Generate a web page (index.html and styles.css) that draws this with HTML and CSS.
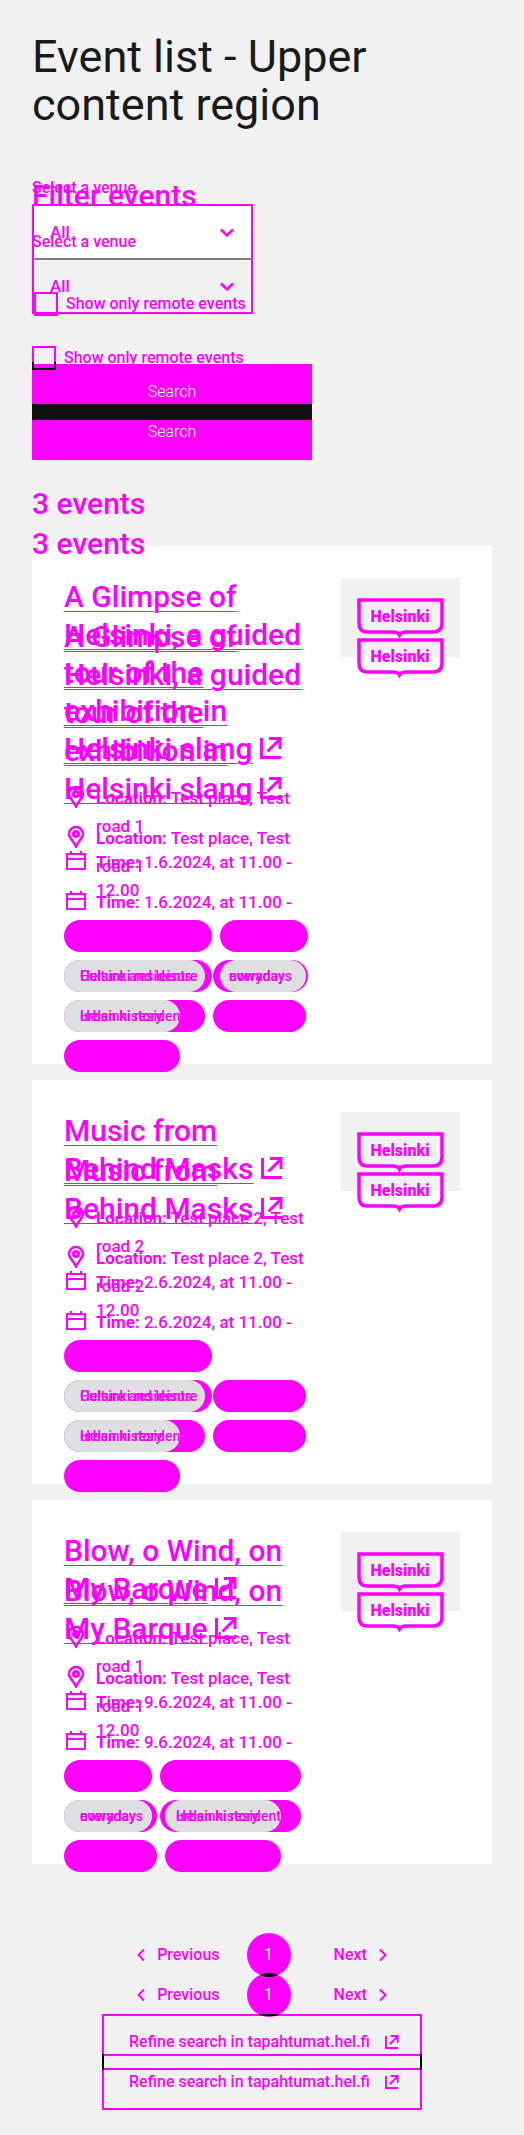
FILE: index.html
```html
<!DOCTYPE html>
<html lang="en">
<head>
<meta charset="utf-8">
<meta name="viewport" content="width=device-width, initial-scale=1">
<title>Event list - Upper content region</title>
<link rel="stylesheet" href="styles.css">
</head>
<body>
<svg class="symbols" aria-hidden="true">
  <symbol id="external" viewBox="0 0 22 22"><path d="M1.5 1V20.5H21M7.500 14.500 19 3M9 1.500H20V12" fill="none" stroke="currentColor" stroke-width="3"/></symbol>
  <symbol id="pin" viewBox="0 0 24 24"><path d="M12 3a7 7 0 0 0-7 7c0 4.500 5 7 7 12.500C14 17 19 14.500 19 10a7 7 0 0 0-7-7z" fill="none" stroke="currentColor" stroke-width="2.500"/><circle cx="12" cy="10" r="2.500" fill="none" stroke="currentColor" stroke-width="3"/></symbol>
  <symbol id="calendar" viewBox="0 0 24 24"><path d="M3 6H21V21H3ZM3 11H21M7 3V6M17 3V6" fill="none" stroke="currentColor" stroke-width="2"/></symbol>
  <symbol id="down" viewBox="0 0 14 10"><path d="M1 1.500 7 7.500 13 1.500" fill="none" stroke="currentColor" stroke-width="2.500"/></symbol>
  <symbol id="prev" viewBox="0 0 8 12"><path d="M7 .5 1.500 6 7 11.500" fill="none" stroke="currentColor" stroke-width="2"/></symbol>
  <symbol id="next" viewBox="0 0 8 12"><path d="M1 .5 6.500 6 1 11.500" fill="none" stroke="currentColor" stroke-width="2"/></symbol>
  <symbol id="logo" viewBox="0 0 88 40"><path d="M3 2H86V25Q86 34 77 34H50Q45 34 43.500 37Q42 34 37 34H11Q3 34 3 25Z" fill="none" stroke="currentColor" stroke-width="3.500"/><text x="44" y="24" text-anchor="middle" class="logo-text">Helsinki</text></symbol>
</svg>
<main class="page">
  <h1>Event list - Upper content region</h1>

  <section class="stack filters">
    <h2 class="filter-title">Filter events</h2>
    <form class="form form-before">
      <label class="label" for="venue-a">Select a venue</label>
      <div class="select-wrap"><select id="venue-a" class="select select-filled"><option>All</option></select><svg class="down"><use href="#down"/></svg></div>
      <div class="check check-before"><input type="checkbox" id="remote-a"><label for="remote-a">Show only remote events</label></div>
      <button type="button" class="search">Search</button>
    </form>
    <form class="form form-after">
      <label class="label" for="venue-b">Select a venue</label>
      <div class="select-wrap"><select id="venue-b" class="select select-joined"><option>All</option></select><svg class="down"><use href="#down"/></svg></div>
      <div class="check check-after"><input type="checkbox" id="remote-b"><label for="remote-b">Show only remote events</label></div>
      <button type="button" class="search search-after">Search</button>
    </form>
  </section>

  <div class="stack count"><h2>3 events</h2><h2 class="shifted">3 events</h2></div>

  <section class="cards">
    <article class="card">
      <div class="content">
        <div class="stack">
          <div class="copy">
            <h3><a href="#">A Glimpse of Helsinki, a guided tour of the exhibition in Helsinki slang</a> <svg class="external"><use href="#external"/></svg></h3>
            <p class="meta"><svg><use href="#pin"/></svg><span><b>Location:</b> Test place, Test road 1</span></p>
            <p class="meta"><svg><use href="#calendar"/></svg><span><b>Time:</b> 1.6.2024, at 11.00 - 12.00</span></p>
          </div>
          <div class="copy shifted">
            <h3><a href="#">A Glimpse of Helsinki, a guided tour of the exhibition in Helsinki slang</a> <svg class="external"><use href="#external"/></svg></h3>
            <p class="meta"><svg><use href="#pin"/></svg><span><b>Location:</b> Test place, Test road 1</span></p>
            <p class="meta"><svg><use href="#calendar"/></svg><span><b>Time:</b> 1.6.2024, at 11.00 - 12.00</span></p>
          </div>
        </div>
        <div class="tags">
          <div class="row"><span class="tag w148">Culture and leisure</span><span class="tag w88">everyday</span></div>
          <div class="row tight"><span class="tag w148"><span class="common w141"><i>Helsinki residents</i><i>Culture and leisure</i></span></span><span class="tag w95"><span class="common w86 near"><i>nowadays</i><i>everyday</i></span></span></div>
          <div class="row"><span class="tag w141"><span class="common w116"><i>urban history</i><i>Helsinki residents</i></span></span><span class="tag w93">nowadays</span></div>
          <div class="row"><span class="tag w116">urban history</span></div>
        </div>
      </div>
      <div class="image stack"><svg class="logo" role="img" aria-label="Helsinki"><use href="#logo"/></svg><svg class="logo shifted" aria-hidden="true"><use href="#logo"/></svg></div>
    </article>

    <article class="card">
      <div class="content">
        <div class="stack">
          <div class="copy">
            <h3><a href="#">Music from Behind Masks</a> <svg class="external"><use href="#external"/></svg></h3>
            <p class="meta"><svg><use href="#pin"/></svg><span><b>Location:</b> Test place 2, Test road 2</span></p>
            <p class="meta"><svg><use href="#calendar"/></svg><span><b>Time:</b> 2.6.2024, at 11.00 - 12.00</span></p>
          </div>
          <div class="copy shifted">
            <h3><a href="#">Music from Behind Masks</a> <svg class="external"><use href="#external"/></svg></h3>
            <p class="meta"><svg><use href="#pin"/></svg><span><b>Location:</b> Test place 2, Test road 2</span></p>
            <p class="meta"><svg><use href="#calendar"/></svg><span><b>Time:</b> 2.6.2024, at 11.00 - 12.00</span></p>
          </div>
        </div>
        <div class="tags">
          <div class="row"><span class="tag w148">Culture and leisure</span></div>
          <div class="row tight"><span class="tag w148"><span class="common w141"><i>Helsinki residents</i><i>Culture and leisure</i></span></span><span class="tag w93">nowadays</span></div>
          <div class="row"><span class="tag w141"><span class="common w116"><i>urban history</i><i>Helsinki residents</i></span></span><span class="tag w93">nowadays</span></div>
          <div class="row"><span class="tag w116">urban history</span></div>
        </div>
      </div>
      <div class="image stack"><svg class="logo" role="img" aria-label="Helsinki"><use href="#logo"/></svg><svg class="logo shifted" aria-hidden="true"><use href="#logo"/></svg></div>
    </article>

    <article class="card">
      <div class="content">
        <div class="stack">
          <div class="copy">
            <h3><a href="#">Blow, o Wind, on My Barque</a> <svg class="external"><use href="#external"/></svg></h3>
            <p class="meta"><svg><use href="#pin"/></svg><span><b>Location:</b> Test place, Test road 1</span></p>
            <p class="meta"><svg><use href="#calendar"/></svg><span><b>Time:</b> 9.6.2024, at 11.00 - 12.00</span></p>
          </div>
          <div class="copy shifted">
            <h3><a href="#">Blow, o Wind, on My Barque</a> <svg class="external"><use href="#external"/></svg></h3>
            <p class="meta"><svg><use href="#pin"/></svg><span><b>Location:</b> Test place, Test road 1</span></p>
            <p class="meta"><svg><use href="#calendar"/></svg><span><b>Time:</b> 9.6.2024, at 11.00 - 12.00</span></p>
          </div>
        </div>
        <div class="tags">
          <div class="row"><span class="tag w88">everyday</span><span class="tag w141">Helsinki residents</span></div>
          <div class="row close"><span class="tag w93"><span class="common w88"><i>nowadays</i><i>everyday</i></span></span><span class="tag w141"><span class="common w116 mid"><i>urban history</i><i>Helsinki residents</i></span></span></div>
          <div class="row"><span class="tag w93">nowadays</span><span class="tag w116">urban history</span></div>
        </div>
      </div>
      <div class="image stack"><svg class="logo" role="img" aria-label="Helsinki"><use href="#logo"/></svg><svg class="logo shifted" aria-hidden="true"><use href="#logo"/></svg></div>
    </article>
  </section>

  <div class="stack pagers">
    <nav class="pager" aria-label="Pages"><a href="#"><svg><use href="#prev"/></svg>Previous</a><a href="#" class="current">1</a><a href="#">Next<svg><use href="#next"/></svg></a></nav>
    <nav class="pager shifted" aria-label="Pages, moved"><a href="#"><svg><use href="#prev"/></svg>Previous</a><a href="#" class="current">1</a><a href="#">Next<svg><use href="#next"/></svg></a></nav>
  </div>
  <div class="stack refine-links">
    <a class="refine" href="#">Refine search in tapahtumat.hel.fi<svg><use href="#external"/></svg></a>
    <a class="refine shifted" href="#">Refine search in tapahtumat.hel.fi<svg><use href="#external"/></svg></a>
  </div>
</main>
</body>
</html>
```
FILE: styles.css
```css
:root { --mark: #ff00ff; --ink: #1a1a1a; --page: #f1f1f1; }
* { box-sizing: border-box; }
html { background: var(--page); }
body { margin: 0; background: var(--page); color: var(--mark); font: 16px/24px Roboto, "Liberation Sans", sans-serif; }
h1, h2, h3, p { margin: 0; }
a { color: inherit; text-decoration: none; }
.symbols { position: absolute; width: 0; height: 0; }
.page { padding: 33px 32px 65px; }
h1 { color: var(--ink); font-size: 45px; line-height: 48px; font-weight: 400; }
h2 { font-size: 30px; line-height: 36px; font-weight: 500; }

/* Two revisions share one grid cell; the later one sits 40px lower. */
.stack { display: grid; }
.stack > * { grid-area: 1 / 1; min-width: 0; }
.shifted { margin-top: 40px; margin-bottom: -40px; }

.filters { margin-top: 47px; align-items: start; }
.filter-title { margin-top: 2px; }
.form { position: relative; display: flex; flex-direction: column; align-items: flex-start; }
.form-after { margin-top: 54px; }
.label { font-weight: 500; margin-bottom: 4px; }
.select-wrap { position: relative; width: 100%; max-width: 221px; }
.select { appearance: none; width: 100%; height: 56px; padding: 0 16px; border: 2px solid var(--mark); border-radius: 0; background: transparent; color: var(--mark); font: 500 17px/24px Roboto, sans-serif; }
.select-filled { background: #fff; }
.select-joined { border-top-color: #808080; }
.down { position: absolute; right: 19px; top: 24px; width: 14px; height: 10px; }
.check { display: flex; align-items: center; gap: 8px; margin-top: 32px; font-weight: 500; }
.check input { appearance: none; position: relative; width: 24px; height: 24px; margin: 0; border: 2px solid var(--mark); }
.check-before { margin-left: 2px; }
.check-after input::after { content: ""; position: absolute; left: -2px; right: -2px; bottom: -2px; height: 6px; border: 2px solid #111; border-top: 0; }
.search { width: 100%; max-width: 280px; height: 56px; margin-top: 48px; border: 0; background: var(--mark); color: #fff; font: 300 16px/24px Roboto, sans-serif; }
.search-after { margin-top: 34px; background: linear-gradient(#111 16px, var(--mark) 16px); }
.check-after { position: relative; }

.count { margin-top: 26px; margin-bottom: 24px; position: relative; z-index: 1; }
.cards { display: grid; gap: 16px; }
.card { display: flex; align-items: flex-start; gap: 32px; padding: 32px; background: #fff; }
.content { flex: 1; min-width: 0; }
.copy { display: grid; }
h3 { font-size: 30px; line-height: 38px; font-weight: 500; margin-bottom: 16px; }
h3 a { text-decoration: underline; text-decoration-thickness: 1px; text-underline-offset: 4px; }
.external { width: 22px; height: 22px; }
.meta { display: flex; gap: 8px; font-size: 17px; line-height: 28px; font-weight: 500; }
.meta + .meta { margin-top: 8px; }
.meta svg { flex: none; width: 24px; height: 24px; }
.meta b { font-weight: 700; }
.tags { position: relative; display: grid; gap: 8px; margin-top: 16px; margin-bottom: -40px; }
.row { display: flex; gap: 8px; }
.tight { gap: 1px; }
.close { gap: 3px; }
.tag { height: 32px; padding: 4px 0 4px 16px; border-radius: 16px; background: var(--mark); font-size: 14px; white-space: nowrap; }
.common { display: grid; height: 32px; margin: -4px 0 0 -16px; padding: 4px 0 4px 16px; border-radius: 16px; background: #dedfe1; font-weight: 500; }
.common i { grid-area: 1 / 1; font-style: normal; }
.near { margin-left: -9px; padding-left: 9px; }
.mid { margin-left: -11px; padding-left: 11px; }
.w86 { width: 86px; }
.w88 { width: 88px; }
.w93 { width: 93px; }
.w95 { width: 95px; }
.w116 { width: 116px; }
.w141 { width: 141px; }
.w148 { width: 148px; }
.image { flex: none; width: 119px; height: 79px; padding: 20px 15px; background: var(--page); }
.logo { width: 88px; height: 40px; }
.logo-text { fill: currentColor; font: 900 16px Roboto, sans-serif; }

.pagers { margin-top: 69px; position: relative; z-index: 1; }
.pager { display: flex; justify-content: center; align-items: center; font-weight: 500; }
.pager a { display: flex; align-items: center; gap: 12px; }
.pager svg { width: 8px; height: 12px; }
.pager .current { justify-content: center; width: 44px; height: 44px; margin: 0 43px 0 27px; border-radius: 50%; background: var(--mark); color: #fff; font-weight: 400; }
.pager.shifted .current { background: linear-gradient(transparent 41px, #000 41px, #000 43px, transparent 43px), radial-gradient(circle at 22px -18px, #000 22px, var(--mark) 22px); }
.refine-links { margin-top: 37px; justify-content: center; }
.refine { position: relative; display: flex; align-items: center; justify-content: space-between; width: 320px; max-width: 100%; height: 56px; padding: 0 21px 0 25px; border: 2px solid var(--mark); font-weight: 500; }
.refine svg { width: 14px; height: 14px; }
.refine.shifted::before { content: ""; position: absolute; top: -2px; left: -2px; right: -2px; height: 16px; border: solid #000; border-width: 0 2px; }
```
